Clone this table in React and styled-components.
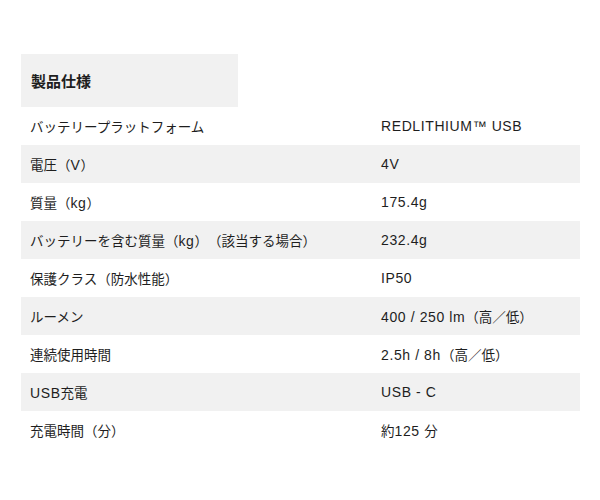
import React from "react";
import styled, { createGlobalStyle } from "styled-components";

const GlobalStyle = createGlobalStyle`
  body {
    margin: 0;
    background: #fff;
    font-family: "Liberation Sans", "Noto Sans CJK JP", sans-serif;
    color: #1e1e1e;
    text-spacing-trim: space-all;
  }
`;

const Page = styled.div`
  padding: 54px 20px 0 21px;
`;

const Heading = styled.h2`
  margin: 0;
  width: 217px;
  height: 53px;
  box-sizing: border-box;
  padding: 0 10px;
  display: flex;
  align-items: center;
  background: #f1f1f1;
  font-size: 15px;
  font-weight: bold;
`;

const Table = styled.div`
  width: 559px;
  display: flex;
  flex-direction: column;
`;

const Row = styled.div`
  display: grid;
  grid-template-columns: 351px 1fr;
  align-items: center;
  height: 38px;
  padding-left: 9px;
  background: ${(p) => (p.$shaded ? "#f1f1f1" : "#fff")};
  font-size: 13.5px;
`;

const Cell = styled.span`
  white-space: nowrap;
`;

// latin runs are set a little larger and wider than the kana/kanji around them
const Latin = styled.span`
  font-size: 14px;
  letter-spacing: 0.6px;
`;

function MixedText({ text }) {
  const parts = text.split(/([\u0000-\u024F™]+)/).filter(Boolean);
  return parts.map((part, i) =>
    /^[\u0000-\u024F™]+$/.test(part) ? <Latin key={i}>{part}</Latin> : part
  );
}

const specs = [
  ["バッテリープラットフォーム", "REDLITHIUM™ USB"],
  ["電圧（V）", "4V"],
  ["質量（kg）", "175.4g"],
  ["バッテリーを含む質量（kg）（該当する場合）", "232.4g"],
  ["保護クラス（防水性能）", "IP50"],
  ["ルーメン", "400 / 250 lm（高／低）"],
  ["連続使用時間", "2.5h / 8h（高／低）"],
  ["USB充電", "USB - C"],
  ["充電時間（分）", "約125 分"],
];

export default function App() {
  return (
    <>
      <GlobalStyle />
      <Page>
        <Heading>製品仕様</Heading>
        <Table>
          {specs.map(([label, value], i) => (
            <Row key={label} $shaded={i % 2 === 1}>
              <Cell>
                <MixedText text={label} />
              </Cell>
              <Cell>
                <MixedText text={value} />
              </Cell>
            </Row>
          ))}
        </Table>
      </Page>
    </>
  );
}
